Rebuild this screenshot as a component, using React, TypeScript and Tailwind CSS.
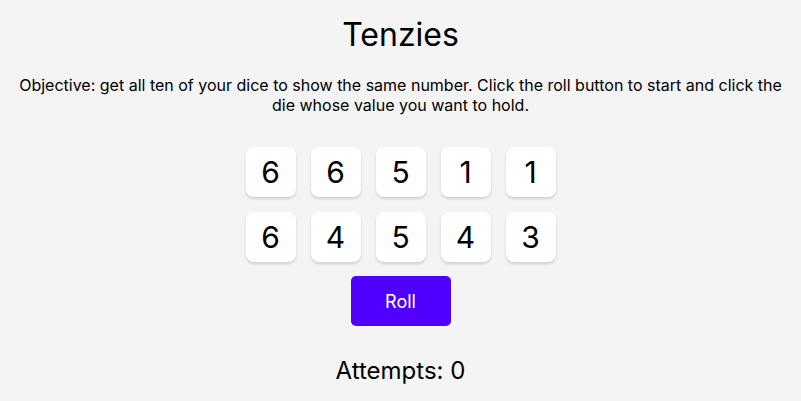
import React from 'react';

const dice = [6, 6, 5, 1, 1, 6, 4, 5, 4, 3];

export default function App() {
  return (
    <main
      className="min-h-[401px] w-full bg-[#f4f4f4] px-4 text-center text-black"
      style={{ fontFamily: 'Inter, "Noto Sans", sans-serif' }}
    >
      <h1 className="pt-[15px] text-[32px] leading-[40px] font-normal">Tenzies</h1>
      <p className="mt-[20px] text-[16px] leading-[20px]">
        Objective: get all ten of your dice to show the same number. Click the roll button to start and click the
        die whose value you want to hold.
      </p>
      <div className="mx-auto mt-[32px] grid w-fit grid-cols-5 gap-[15px]">
        {dice.map((d, i) => (
          <button
            key={i}
            className="flex h-[50px] w-[50px] items-center justify-center rounded-[8px] bg-white text-[30px] shadow-[0_2px_3px_rgba(0,0,0,0.15)]"
          >
            {d}
          </button>
        ))}
      </div>
      <button className="mx-auto mt-[14px] block h-[50px] w-[100px] rounded-[5px] bg-[#5000ff] text-[18px] text-white">
        Roll
      </button>
      <p className="mt-[30px] text-[24px] leading-[30px]">Attempts: 0</p>
    </main>
  );
}
